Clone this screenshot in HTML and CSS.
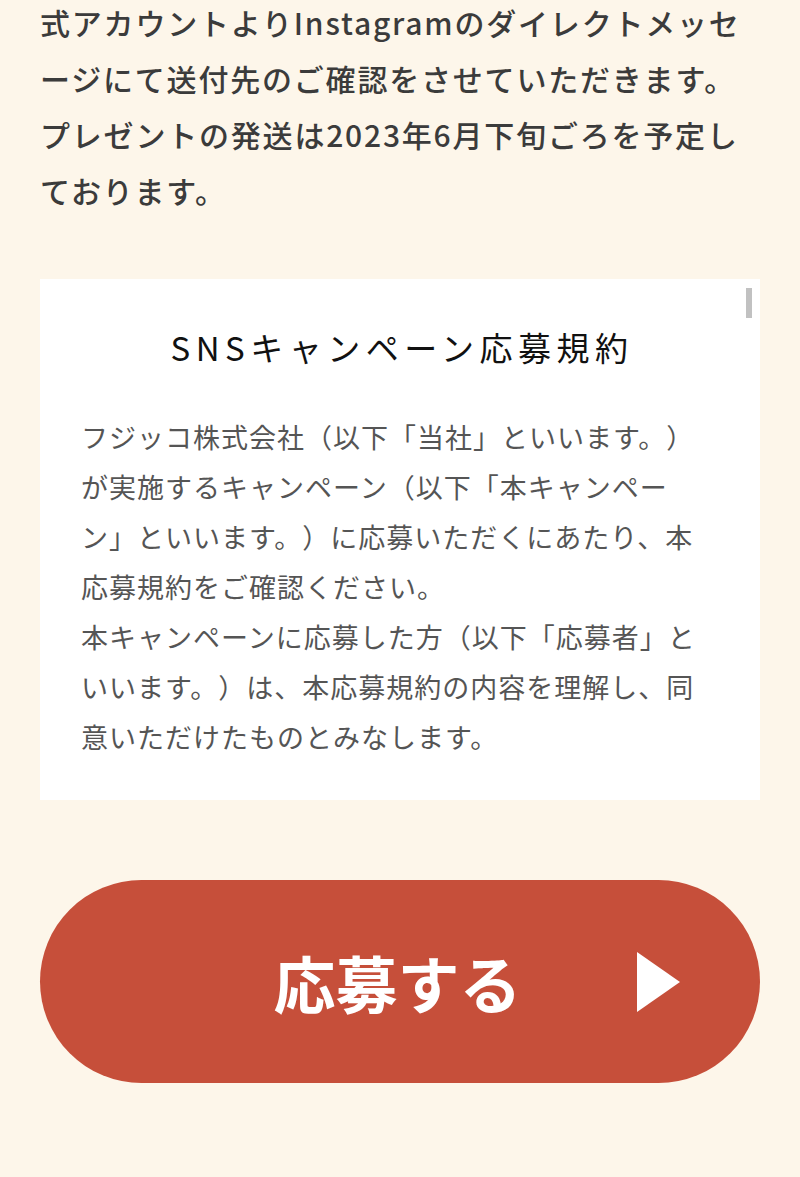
FILE: index.html
```html
<!DOCTYPE html>
<html lang="ja">
<head>
    <meta charset="UTF-8">
    <meta name="viewport" content="width=device-width, initial-scale=1.0">
    <title>SNSキャンペーン応募規約</title>
    <link rel="stylesheet" href="styles.css">
</head>
<body>

    <div class="container">
        <p class="intro">式アカウントよりInstagramのダイレクトメッセージにて送付先のご確認をさせていただきます。プレゼントの発送は2023年6月下旬ごろを予定しております。</p>

        <div class="terms">
            <div class="terms-scroll">
                <h2>SNSキャンペーン応募規約</h2>
                <div class="terms-body">
                    <p>フジッコ株式会社（以下「当社」といいます。）が実施するキャンペーン（以下「本キャンペーン」といいます。）に応募いただくにあたり、本応募規約をご確認ください。<br>本キャンペーンに応募した方（以下「応募者」といいます。）は、本応募規約の内容を理解し、同意いただけたものとみなします。</p>

                    <h3>1. 応募資格</h3>
                    <p>日本国内に在住し、賞品の送付先が日本国内である方に限ります。Instagramのアカウントをお持ちで、当社公式アカウントをフォローしている方が対象となります。アカウントを非公開に設定している場合は応募の対象外となります。当社の従業員およびその家族、関係者は応募できません。</p>

                    <h3>2. 応募期間</h3>
                    <p>応募期間は当社公式アカウントにて告知する期間とします。期間外の応募は無効となりますのでご注意ください。</p>

                    <h3>3. 応募方法</h3>
                    <p>当社公式アカウントをフォローのうえ、対象の投稿に「いいね」をすることで応募完了となります。おひとり様一回限りの応募とし、複数のアカウントによる応募は無効とさせていただく場合があります。</p>

                    <h3>4. 当選者の決定および通知</h3>
                    <p>当選者は応募者の中から厳正なる抽選により決定いたします。当選者には当社公式アカウントよりInstagramのダイレクトメッセージにてご連絡いたします。当選の連絡後、指定の期日までに送付先情報をご登録いただけない場合は、当選を無効とさせていただきます。抽選の経過および結果に関するお問い合わせにはお答えできません。</p>

                    <h3>5. 賞品について</h3>
                    <p>賞品の発送先は日本国内に限ります。賞品の換金、交換、返品および当選権利の譲渡はできません。住所不明や長期不在などにより賞品をお届けできない場合は、当選を無効とさせていただきます。賞品の内容は都合により変更となる場合があります。</p>

                    <h3>6. 禁止事項</h3>
                    <p>応募にあたり、次の行為を禁止します。法令または公序良俗に反する行為、第三者の権利を侵害する行為、当社または第三者を誹謗中傷する行為、不正な手段による応募、その他当社が不適切と判断する行為。これらに該当すると当社が判断した場合は、応募および当選を無効とさせていただきます。</p>

                    <h3>7. 個人情報の取り扱い</h3>
                    <p>応募者からお預かりした個人情報は、当社のプライバシーポリシーに従い適切に管理いたします。お預かりした個人情報は、当選のご連絡および賞品の発送のために利用し、その他の目的では利用いたしません。賞品の発送業務を委託する場合は、委託先に対して必要かつ適切な監督を行います。</p>

                    <h3>8. 免責事項</h3>
                    <p>本キャンペーンはInstagramが支援、承認、運営、関与するものではありません。通信環境や機器の不具合などにより応募できなかった場合について、当社は一切の責任を負いません。賞品の配送中の事故や遅延について、当社は一切の責任を負いません。天災、システム障害その他やむを得ない事情により、本キャンペーンを予告なく中止または変更する場合があります。</p>

                    <h3>9. 規約の変更</h3>
                    <p>当社は、必要に応じて本応募規約の内容を予告なく変更することがあります。変更後の規約は当社が定める方法により告知した時点から効力を生じるものとします。</p>

                    <h3>10. 準拠法および管轄裁判所</h3>
                    <p>本応募規約の準拠法は日本法とします。本キャンペーンに関して生じた紛争については、当社の本店所在地を管轄する地方裁判所を第一審の専属的合意管轄裁判所とします。</p>

                    <h3>お問い合わせ</h3>
                    <p>フジッコ株式会社 お客様相談室<br>受付時間：平日9時〜17時（土日祝日、年末年始を除く）</p>
                </div>
            </div>
            <span class="scroll-thumb"></span>
        </div>

        <button type="button" class="entry-btn">
            <span class="entry-label">応募する</span>
            <span class="entry-arrow"></span>
        </button>
    </div>

</body>
</html>
```

FILE: styles.css
```css
body {
    margin: 0;
    background-color: #fdf6ea;
    font-family: 'Noto Sans CJK JP', 'Noto Sans', sans-serif;
    color: #3b3b3b;
    text-spacing-trim: space-all;
}
.container {
    padding: 0 40px;
}
.intro {
    margin: -6px 0 0;
    font-size: 30px;
    font-weight: 500;
    line-height: 56px;
    letter-spacing: 1.8px;
}
.terms {
    position: relative;
    margin-top: 61px;
    background: #fff;
    padding: 9px 8px 8px 0;
}
.terms-scroll {
    height: 504px;
    overflow-y: auto;
    padding-top: 35px;
    box-sizing: border-box;
    scrollbar-width: none;
}
.scroll-thumb {
    position: absolute;
    top: 9px;
    right: 8px;
    width: 6px;
    height: 30px;
    background: #c1c1c1;
}
.terms h2 {
    margin: 0;
    padding-left: 12px;
    text-align: center;
    font-size: 33px;
    font-weight: 400;
    line-height: 48px;
    letter-spacing: 5.5px;
    color: #111;
}
.terms-body {
    margin-top: 41px;
    padding: 0 45px 40px 41px;
    font-size: 27px;
    line-height: 50px;
    letter-spacing: 1px;
    color: #555;
}
.terms-body p {
    margin: 0;
}
.terms-body h3 {
    margin: 30px 0 0;
    font-size: 27px;
    font-weight: 500;
    line-height: 50px;
    color: #444;
}
.entry-btn {
    display: grid;
    grid-template-columns: 1fr auto 1fr;
    align-items: center;
    width: 100%;
    height: 203px;
    margin-top: 80px;
    padding: 0;
    background-color: #c64f3a;
    border: none;
    border-radius: 102px;
    color: #fff;
    font-family: 'Noto Sans CJK JP', sans-serif;
    cursor: pointer;
}
.entry-label {
    grid-column: 2;
    font-size: 62px;
    font-weight: 700;
    line-height: 1;
    margin-right: 5px;
}
.entry-arrow {
    grid-column: 3;
    justify-self: end;
    margin-right: 80px;
    width: 0;
    height: 0;
    border-top: 30px solid transparent;
    border-bottom: 30px solid transparent;
    border-left: 43px solid #fff;
}
```
